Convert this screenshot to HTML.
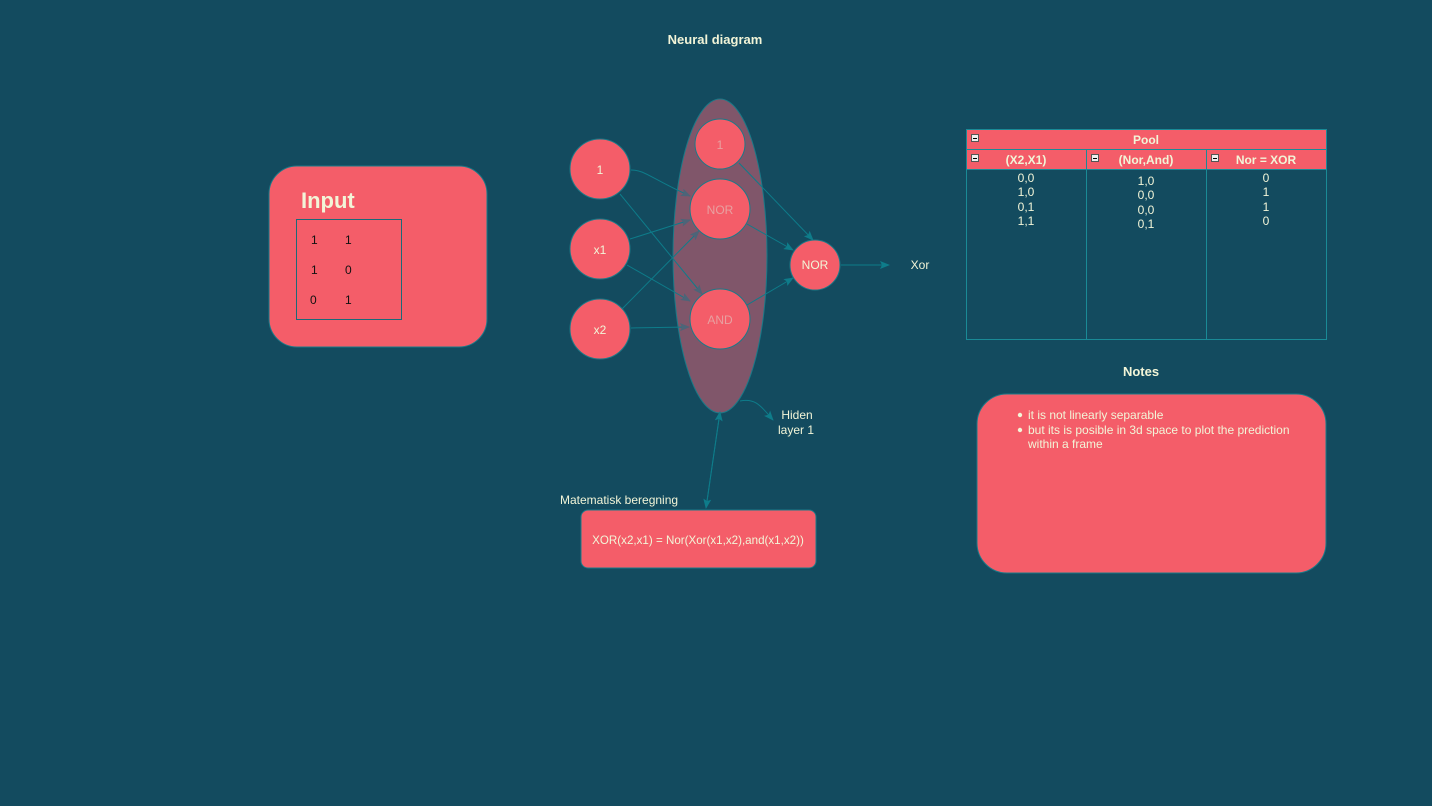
<!DOCTYPE html>
<html><head><meta charset="utf-8"><style>
html,body{margin:0;padding:0;background:#134b5f;width:1432px;height:806px;overflow:hidden}
svg{display:block;font-family:"Liberation Sans",Arial,sans-serif}
</style></head><body>
<svg width="1432" height="806" viewBox="0 0 1432 806">
<defs>
<marker id="a" markerWidth="10" markerHeight="8" refX="9" refY="4" orient="auto" markerUnits="userSpaceOnUse"><path d="M0,0 L10,4 L0,8 L2,4 z" fill="#0e7c8a"/></marker>
<marker id="b" markerWidth="10" markerHeight="8" refX="9" refY="4" orient="auto" markerUnits="userSpaceOnUse"><path d="M0,0 L10,4 L0,8 L2,4 z" fill="#4d6478"/></marker>
</defs>
<rect width="1432" height="806" fill="#134b5f"/>
<text x="715" y="44" fill="#f2f5d8" font-size="13" font-weight="bold" text-anchor="middle">Neural diagram</text>

<rect x="269" y="166" width="218" height="181" rx="28" fill="#f45d69" stroke="#1a7a88" stroke-width="1"/>
<text x="301" y="208" fill="#f2f5d8" font-size="22" font-weight="bold">Input</text>
<rect x="296.5" y="219.5" width="105" height="100" fill="none" stroke="#1a6a78" stroke-width="1"/>
<g font-size="12" fill="#111">
<text x="311" y="244">1</text><text x="345" y="244">1</text>
<text x="311" y="274">1</text><text x="345" y="274">0</text>
<text x="310" y="304">0</text><text x="345" y="304">1</text>
</g>

<ellipse cx="720" cy="256" rx="47" ry="157" fill="#80566a" stroke="#1a7a88" stroke-width="1"/>

<g fill="none" stroke-width="1">
<path d="M631,170 C645,170 650,178 690,196" stroke="#0e7c8a" marker-end="url(#b)"/>
<path d="M620,194 L702,294" stroke="#0e7c8a" marker-end="url(#b)"/>
<path d="M630,239 L690,220" stroke="#0e7c8a" marker-end="url(#b)"/>
<path d="M627,265 L690,301" stroke="#0e7c8a" marker-end="url(#b)"/>
<path d="M622,309 L699,231" stroke="#0e7c8a" marker-end="url(#b)"/>
<path d="M631,328 L689,327" stroke="#0e7c8a" marker-end="url(#b)"/>
<path d="M739,163 L813,240" stroke="#0e7c8a" marker-end="url(#a)"/>
<path d="M747,224 L793,250" stroke="#0e7c8a" marker-end="url(#a)"/>
<path d="M747,305 L793,278" stroke="#0e7c8a" marker-end="url(#a)"/>
<path d="M841,265 L889,265" stroke="#0e7c8a" marker-end="url(#a)"/>
<path d="M740,401 C755,398 760,405 773,420" stroke="#0e7c8a" marker-end="url(#a)"/>
<path d="M706,508 L720,412" stroke="#0e7c8a" marker-end="url(#a)"/>
<path d="M720,412 L706,508" stroke="#0e7c8a" marker-end="url(#a)"/>
</g>

<g stroke="#1a7a88" stroke-width="1" fill="#f45d69">
<circle cx="600" cy="169" r="30"/><circle cx="600" cy="249" r="30"/><circle cx="600" cy="329" r="30"/>
<circle cx="720" cy="144" r="25"/><circle cx="720" cy="209" r="30"/><circle cx="720" cy="319" r="30"/>
<circle cx="815" cy="265" r="25"/>
</g>
<g font-size="12" text-anchor="middle">
<text x="600" y="174" fill="#f2f5d8">1</text>
<text x="600" y="254" fill="#f2f5d8">x1</text>
<text x="600" y="334" fill="#f2f5d8">x2</text>
<text x="720" y="149" fill="#e8a0a0">1</text>
<text x="720" y="214" fill="#e8a0a0">NOR</text>
<text x="720" y="324" fill="#e8a0a0">AND</text>
<text x="815" y="269" fill="#f2f5d8">NOR</text>
<text x="920" y="269" fill="#f2f5d8">Xor</text>
<text x="797" y="419" fill="#f2f5d8">Hiden</text>
<text x="796" y="434" fill="#f2f5d8">layer 1</text>
</g>
<text x="560" y="504" fill="#f2f5d8" font-size="12">Matematisk beregning</text>
<rect x="581" y="510" width="235" height="58" rx="7" fill="#f45d69" stroke="#1a7a88"/>
<text x="698" y="544" fill="#f2f5d8" font-size="11.6" text-anchor="middle">XOR(x2,x1) = Nor(Xor(x1,x2),and(x1,x2))</text>

<rect x="966.5" y="129.5" width="360" height="210" fill="none" stroke="#1a8a96"/>
<rect x="966.5" y="129.5" width="360" height="20" fill="#f45d69" stroke="#1a8a96"/>
<rect x="966.5" y="149.5" width="120" height="20" fill="#f45d69" stroke="#1a8a96"/>
<rect x="1086.5" y="149.5" width="120" height="20" fill="#f45d69" stroke="#1a8a96"/>
<rect x="1206.5" y="149.5" width="120" height="20" fill="#f45d69" stroke="#1a8a96"/>
<line x1="1086.5" y1="169" x2="1086.5" y2="339" stroke="#1a8a96"/>
<line x1="1206.5" y1="169" x2="1206.5" y2="339" stroke="#1a8a96"/>
<g fill="#eee" stroke="#555" stroke-width="1">
<rect x="971.5" y="134.5" width="7" height="7"/><rect x="971.5" y="154.5" width="7" height="7"/>
<rect x="1091.5" y="154.5" width="7" height="7"/><rect x="1211.5" y="154.5" width="7" height="7"/>
</g>
<g stroke="#000" stroke-width="1"><line x1="973" y1="138.5" x2="977" y2="138.5"/><line x1="973" y1="158.5" x2="977" y2="158.5"/><line x1="1093" y1="158.5" x2="1097" y2="158.5"/><line x1="1213" y1="158.5" x2="1217" y2="158.5"/></g>
<g font-size="12" font-weight="bold" fill="#f2f5d8" text-anchor="middle">
<text x="1146" y="144">Pool</text>
<text x="1026" y="164">(X2,X1)</text>
<text x="1146" y="164">(Nor,And)</text>
<text x="1266" y="164">Nor = XOR</text>
</g>
<g font-size="12" fill="#f2f5d8" text-anchor="middle">
<text x="1026" y="182">0,0</text><text x="1026" y="196">1,0</text><text x="1026" y="211">0,1</text><text x="1026" y="225">1,1</text>
<text x="1146" y="185">1,0</text><text x="1146" y="199">0,0</text><text x="1146" y="214">0,0</text><text x="1146" y="228">0,1</text>
<text x="1266" y="182">0</text><text x="1266" y="196">1</text><text x="1266" y="211">1</text><text x="1266" y="225">0</text>
</g>

<text x="1141" y="376" fill="#f2f5d8" font-size="13" font-weight="bold" text-anchor="middle">Notes</text>
<rect x="977" y="394" width="349" height="179" rx="30" fill="#f45d69" stroke="#1a7a88"/>
<g fill="#f2f5d8" font-size="12">
<circle cx="1020" cy="415" r="2.2"/><circle cx="1020" cy="430" r="2.2"/>
<text x="1028" y="419">it is not linearly separable</text>
<text x="1028" y="434">but its is posible in 3d space to plot the prediction</text>
<text x="1028" y="448">within a frame</text>
</g>
</svg>
</body></html>
